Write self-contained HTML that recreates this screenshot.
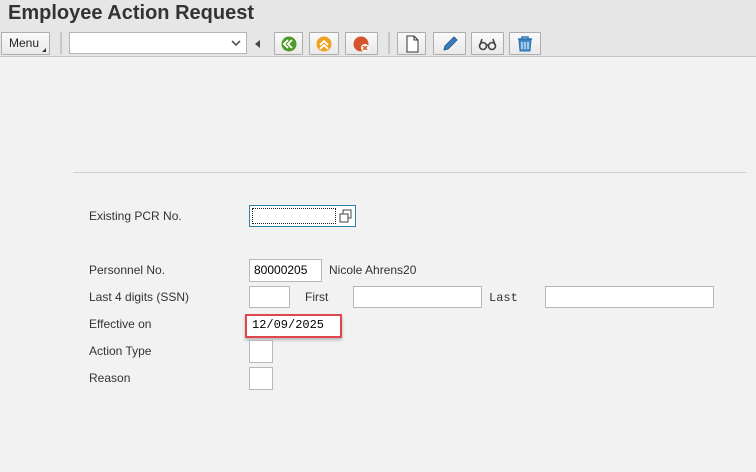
<!DOCTYPE html>
<html><head><meta charset="utf-8"><style>
*{box-sizing:border-box;margin:0;padding:0}
body{width:756px;height:472px;overflow:hidden;background:#f2f2f2;font-family:"Liberation Sans",Arial,sans-serif;position:relative}
.hdr{position:absolute;left:0;top:0;width:756px;height:57px;background:#e6e6e6;border-bottom:1px solid #c4c4c4}
.title{position:absolute;left:8px;top:2px;font-size:20px;font-weight:bold;color:#333}
.a{position:absolute}
.btn{position:absolute;top:32px;height:23px;border:1px solid #adadad;background:linear-gradient(#fafafa,#e9e9e9);border-radius:1px}
.sep{position:absolute;top:32px;width:2px;height:22px;background:#c8c8c8}
.lbl{position:absolute;left:89px;font-size:12px;color:#333}
.in{position:absolute;background:#fff;border:1px solid #b8b8b8;font-size:12px;color:#000;font-family:"Liberation Sans",sans-serif;padding:3px 4px}
.mono{font-family:"Liberation Mono",monospace;font-size:12px}
</style></head><body>
<div class="hdr">
<div class="title">Employee Action Request</div>
<div class="btn" style="left:1px;width:49px;font-size:12px;color:#222;padding:3px 0 0 7px">Menu<span style="position:absolute;right:3px;bottom:2px;width:0;height:0;border-left:4px solid transparent;border-bottom:4px solid #333"></span></div>
<div class="sep" style="left:60px"></div>
<div class="a" style="left:69px;top:32px;width:178px;height:22px;background:#fff;border:1px solid #b5b5b5"><svg class="a" style="left:161px;top:7px" width="10" height="7"><path d="M1 1l4 4 4-4" stroke="#555" stroke-width="1.6" fill="none"/></svg></div>
<div class="a" style="left:255px;top:40px;width:0;height:0;border-top:4px solid transparent;border-bottom:4px solid transparent;border-right:5px solid #444"></div>
<div class="btn" style="left:274px;width:29px"><svg width="27" height="21"><circle cx="14" cy="11" r="7.5" fill="#4e9a2a"/><path d="M17 7l-4 4 4 4M13 7l-4 4 4 4" stroke="#fff" stroke-width="1.8" fill="none"/></svg></div>
<div class="btn" style="left:309px;width:30px"><svg width="28" height="21"><circle cx="14" cy="11" r="7.5" fill="#f0a21c"/><path d="M10 12l4-4 4 4M10 16l4-4 4 4" stroke="#fff" stroke-width="1.8" fill="none"/></svg></div>
<div class="btn" style="left:345px;width:33px"><svg width="31" height="21"><circle cx="15" cy="11" r="7.5" fill="#d5542c"/><circle cx="19" cy="15" r="4" fill="#fff"/><path d="M17 13l4 4M21 13l-4 4" stroke="#d5542c" stroke-width="1.5"/></svg></div>
<div class="sep" style="left:388px"></div>
<div class="btn" style="left:397px;width:29px"><svg width="27" height="21"><path d="M9 3h7l4 4v12H9z" fill="#fff" stroke="#333"/><path d="M16 3v4h4" fill="none" stroke="#333"/></svg></div>
<div class="btn" style="left:433px;width:33px"><svg width="31" height="21"><path d="M10 17l1-4 9-9 3 3-9 9z" fill="#3a7ebf" stroke="#2a5f90"/></svg></div>
<div class="btn" style="left:471px;width:33px"><svg width="31" height="21"><circle cx="11" cy="13" r="3.5" fill="none" stroke="#444" stroke-width="1.6"/><circle cx="20" cy="13" r="3.5" fill="none" stroke="#444" stroke-width="1.6"/><path d="M8 12l2-6M23 12l-2-6M14 12h3" stroke="#444" stroke-width="1.6"/></svg></div>
<div class="btn" style="left:509px;width:32px"><svg width="30" height="21"><path d="M8 6h14M12 6V4h6v2" stroke="#2f7ab8" stroke-width="1.6" fill="none"/><path d="M9 7h12l-1 11h-10z" fill="#4a90d0" stroke="#2f6fa8"/><path d="M12 9v7M15 9v7M18 9v7" stroke="#fff"/></svg></div>
</div>
<div class="a" style="left:73px;top:172px;width:673px;height:1px;background:#cfcfcf"></div>
<div class="lbl" style="top:209px">Existing PCR No.</div>
<div class="a" style="left:249px;top:205px;width:107px;height:22px;background:#fff;border:1px solid #2f7fa8"><div class="a" style="left:2px;top:2px;width:84px;height:16px;border:1px dotted #222"></div><svg class="a" style="left:89px;top:3px" width="14" height="14"><rect x="4" y="1" width="8" height="8" fill="none" stroke="#444"/><rect x="1" y="5" width="8" height="8" fill="#fff" stroke="#444"/></svg></div>
<div class="lbl" style="top:263px">Personnel No.</div>
<div class="in" style="left:249px;top:259px;width:73px;height:23px">80000205</div>
<div class="a" style="left:329px;top:263px;font-size:12px;color:#333">Nicole Ahrens20</div>
<div class="lbl" style="top:290px">Last 4 digits (SSN)</div>
<div class="in" style="left:249px;top:286px;width:41px;height:22px"></div>
<div class="a" style="left:305px;top:290px;font-size:12px;color:#333">First</div>
<div class="in" style="left:353px;top:286px;width:129px;height:22px"></div>
<div class="a mono" style="left:489px;top:291px;color:#333">Last</div>
<div class="in" style="left:545px;top:286px;width:169px;height:22px"></div>
<div class="lbl" style="top:317px">Effective on</div>
<div class="a" style="left:245px;top:314px;width:97px;height:24px;background:#fff;border:2px solid #e0474c;box-shadow:0 2px 3px rgba(0,0,0,.25)"><span class="mono a" style="left:5px;top:2px">12/09/2025</span></div>
<div class="lbl" style="top:344px">Action Type</div>
<div class="in" style="left:249px;top:340px;width:24px;height:23px"></div>
<div class="lbl" style="top:371px">Reason</div>
<div class="in" style="left:249px;top:367px;width:24px;height:23px"></div>
</body></html>
